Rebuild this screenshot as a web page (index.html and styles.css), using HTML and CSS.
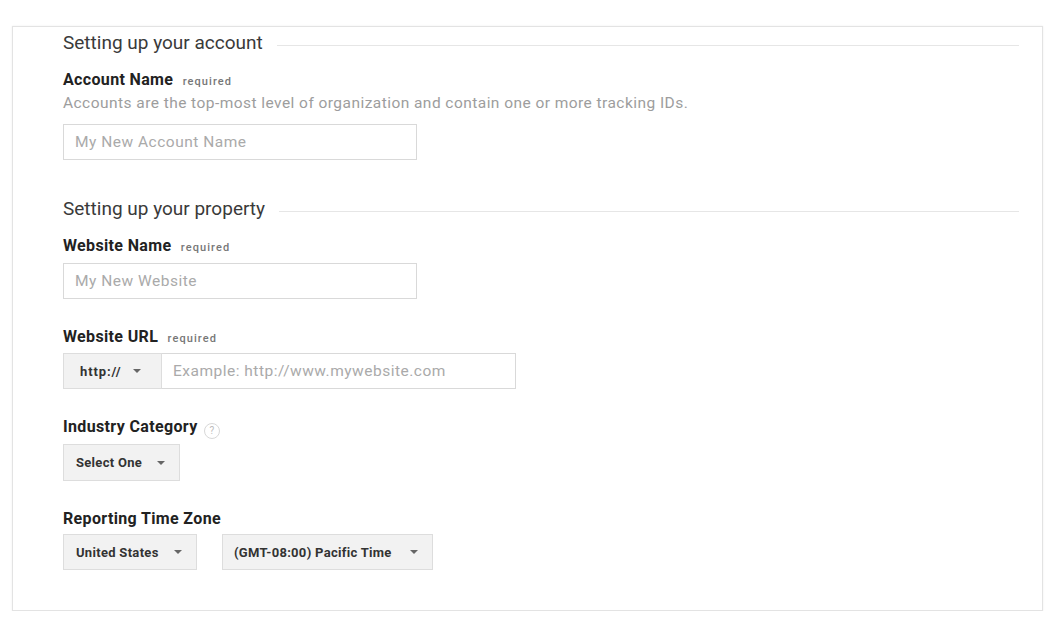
FILE: index.html
```html
<!DOCTYPE html>
<html>
<head>
<meta charset="utf-8">
<link rel="stylesheet" href="styles.css">
</head>
<body>
<div class="page">
  <div class="card">
    <div class="section-head"><span>Setting up your account</span><div class="rule"></div></div>
    <div class="label">Account Name <span class="req">required</span></div>
    <div class="desc">Accounts are the top-most level of organization and contain one or more tracking IDs.</div>
    <div class="input wide">My New Account Name</div>

    <div class="section-head second"><span>Setting up your property</span><div class="rule"></div></div>
    <div class="label">Website Name <span class="req">required</span></div>
    <div class="input wide">My New Website</div>

    <div class="label spaced">Website URL <span class="req">required</span></div>
    <div class="url-group">
      <div class="select proto">http:// <span class="caret"></span></div>
      <div class="input url">Example: http://www.mywebsite.com</div>
    </div>

    <div class="label spaced">Industry Category <span class="help">?</span></div>
    <div class="select industry">Select One <span class="caret"></span></div>

    <div class="label spaced">Reporting Time Zone</div>
    <div class="tz-row">
      <div class="select country">United States <span class="caret"></span></div>
      <div class="select zone">(GMT-08:00) Pacific Time <span class="caret"></span></div>
    </div>
  </div>
</div>
</body>
</html>
```
FILE: styles.css
```css
html, body {
  margin: 0;
  padding: 0;
  background: #ffffff;
}
body {
  font-family: Roboto, "Liberation Sans", Arial, sans-serif;
  color: #222;
}
.page {
  padding: 26px 0 0 12px;
}
.card {
  box-sizing: border-box;
  width: 1031px;
  height: 585px;
  border: 1px solid #e3e3e3;
  box-shadow: 0 0 2px rgba(0,0,0,0.07);
  padding: 4px 23px 0 50px;
}
.section-head {
  display: flex;
  align-items: center;
  height: 24px;
  font-size: 19px;
  line-height: 24px;
  color: #3a3a3a;
}
.section-head .rule {
  flex: 1;
  height: 1px;
  background: #e6e6e6;
  margin-left: 14px;
  margin-top: 4px;
}
.section-head.second {
  margin-top: 37px;
}
.label {
  height: 20px;
  margin-top: 15px;
  font-size: 16px;
  letter-spacing: 0.35px;
  font-weight: 700;
  line-height: 20px;
  color: #222;
}
.label.spaced {
  margin-top: 28px;
}
.req {
  font-size: 11px;
  font-weight: 500;
  letter-spacing: 1.1px;
  color: #777;
  margin-left: 5px;
  vertical-align: baseline;
}
.help {
  display: inline-block;
  box-sizing: border-box;
  width: 16px;
  height: 16px;
  border: 1px solid #d8d8d8;
  border-radius: 50%;
  font-size: 10px;
  font-weight: 400;
  letter-spacing: 0;
  color: #bbb;
  line-height: 14px;
  text-align: center;
  margin-left: 2px;
  vertical-align: -2px;
}
.desc {
  margin-top: 3px;
  font-size: 15.5px;
  letter-spacing: 0.45px;
  line-height: 20px;
  color: #9d9d9d;
}
.input {
  box-sizing: border-box;
  height: 36px;
  border: 1px solid #d9d9d9;
  font-size: 15.5px;
  letter-spacing: 0.5px;
  color: #aaa;
  line-height: 34px;
  padding-left: 11px;
  background: #fff;
}
.input.wide {
  width: 354px;
  margin-top: 11px;
}
.label + .input.wide {
  margin-top: 7px;
}
.url-group {
  display: flex;
  margin-top: 6px;
}
.input.url {
  width: 354px;
  border-left: none;
}
.select {
  box-sizing: border-box;
  height: 36px;
  display: flex;
  align-items: center;
  background: #f2f2f2;
  border: 1px solid #dddddd;
  font-size: 13px;
  letter-spacing: 0.3px;
  font-weight: 700;
  color: #333;
  padding: 0 14px 0 12px;
}
.caret {
  width: 0;
  height: 0;
  border-left: 4px solid transparent;
  border-right: 4px solid transparent;
  border-top: 4px solid #666;
  margin-left: auto;
}
.proto {
  width: 99px;
  padding-left: 16px;
  padding-right: 20px;
  letter-spacing: 0.9px;
}
.industry {
  width: 117px;
  height: 37px;
  margin-top: 7px;
}
.tz-row {
  display: flex;
  gap: 25px;
  margin-top: 5px;
}
.country {
  width: 134px;
}
.zone {
  width: 211px;
  padding-left: 11px;
}
```
